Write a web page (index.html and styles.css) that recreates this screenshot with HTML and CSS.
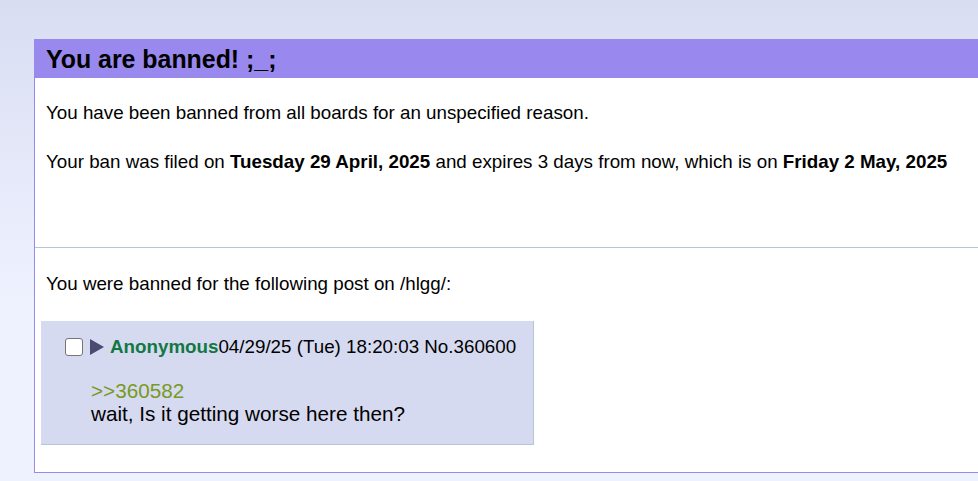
FILE: index.html
```html
<!DOCTYPE html>
<html>
<head>
<meta charset="utf-8">
<title>Banned</title>
<link rel="stylesheet" href="styles.css">
</head>
<body>
<div class="page">
  <div class="box">
    <h2 class="boxbar">You are banned! ;_;</h2>
    <div class="boxcontent">
      <p class="line">You have been banned from all boards for an unspecified reason.</p>
      <p class="line">Your ban was filed on <b>Tuesday 29 April, 2025</b> and expires 3 days from now, which is on <b>Friday 2 May, 2025</b></p>
    </div>
    <hr class="sep">
    <div class="boxcontent lower">
      <p class="line">You were banned for the following post on /hlgg/:</p>
      <div class="reply">
        <div class="postinfo">
          <span class="check"></span>
          <svg class="arrow" width="14" height="16" viewBox="0 0 14 16"><polygon points="0,0 14,8 0,16" fill="#4b4b6f"/></svg>
          <span class="name">Anonymous</span><span class="date">04/29/25 (Tue) 18:20:03 No.360600</span>
        </div>
        <div class="message">
          <span class="quotelink">&gt;&gt;360582</span><br>
          wait, Is it getting worse here then?
        </div>
      </div>
    </div>
  </div>
</div>
</body>
</html>
```

FILE: styles.css
```css
html, body {
  margin: 0;
  padding: 0;
  overflow: hidden;
}
body {
  font-family: "Liberation Sans", Arial, sans-serif;
  color: #000;
  background: linear-gradient(to bottom, #d9ddf2 0px, #eef2ff 300px) #eef2ff;
  min-height: 481px;
}
.page {
  padding: 39px 0 0 34px;
}
.box {
  width: 1000px;
  border: 1px solid #9988ee;
  background: #fff;
}
.boxbar {
  margin: 0;
  background: #9988ee;
  height: 38px;
  line-height: 38px;
  padding: 0 0 0 11px;
  font-size: 24.9px;
  font-weight: bold;
}
.boxcontent {
  padding: 0 11px;
}
.line {
  margin: 0;
  font-size: 18.77px;
  line-height: 22px;
}
.boxcontent .line {
  padding-top: 24px;
}
.boxcontent .line + .line {
  padding-top: 27px;
}
.sep {
  margin: 74px 0 0 0;
  border: 0;
  border-top: 1px solid #b7c5d9;
  height: 0;
}
.lower .line {
  padding-top: 25px;
}
.reply {
  margin: 26px 0 27px -5px;
  width: 493px;
  background: #d6daf0;
  border-bottom: 1px solid #b7c5d9;
  border-right: 1px solid #b7c5d9;
  padding: 15px 0 19px 24px;
  box-sizing: border-box;
  font-size: 18.77px;
}
.postinfo {
  display: flex;
  align-items: center;
  line-height: 22px;
}
.check {
  width: 16px;
  height: 16px;
  border: 1px solid #767676;
  border-radius: 3px;
  background: #fff;
  margin-right: 7px;
}
.arrow {
  margin-right: 6px;
}
.name {
  color: #117743;
  font-weight: bold;
}
.message {
  margin: 21px 0 0 26px;
  line-height: 23px;
  font-size: 20.7px;
}
.quotelink {
  color: #789922;
}
```
